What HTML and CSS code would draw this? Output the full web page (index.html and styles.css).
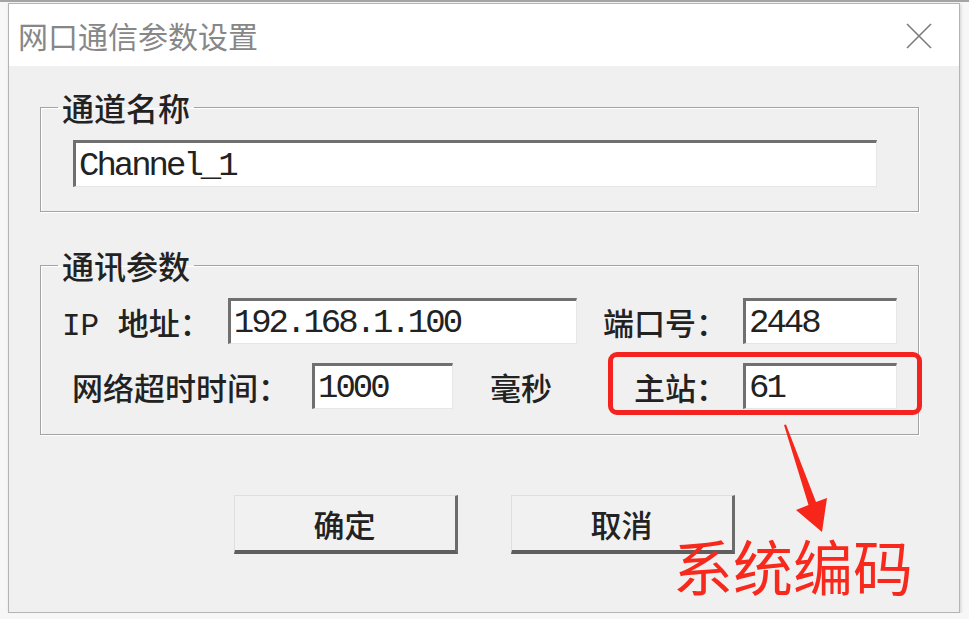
FILE: index.html
```html
<!DOCTYPE html>
<html lang="zh-CN">
<head>
  <meta charset="UTF-8">
  <meta name="viewport" content="width=device-width, initial-scale=1.0">
  <title>网口通信参数设置</title>
  <link rel="stylesheet" href="styles.css">
</head>
<body>
  <div class="dialog">
    <div class="titlebar">
      <span class="title">网口通信参数设置</span>
      <svg class="close" width="26" height="26" viewBox="0 0 26 26">
        <path d="M1 1L25 25M25 1L1 25" />
      </svg>
    </div>

    <div class="content">
      <fieldset class="group group-name">
        <legend>通道名称</legend>
        <div class="group-body">
          <div class="textbox">Channel_1</div>
        </div>
      </fieldset>

      <fieldset class="group group-comm">
        <legend>通讯参数</legend>
        <div class="group-body">
          <div class="row">
            <span class="label">IP 地址：</span>
            <div class="textbox ip">192.168.1.100</div>
            <div class="field-right">
              <span class="label">端口号：</span>
              <div class="textbox short">2448</div>
            </div>
          </div>
          <div class="row row-timeout">
            <span class="label">网络超时时间：</span>
            <div class="textbox timeout">1000</div>
            <span class="label unit">毫秒</span>
            <div class="field-right highlighted">
              <span class="label">主站：</span>
              <div class="textbox short">61</div>
            </div>
          </div>
        </div>
      </fieldset>

      <div class="buttons">
        <button class="btn">确定</button>
        <button class="btn">取消</button>
      </div>
    </div>

    <!-- annotation drawn over the screenshot -->
    <svg class="arrow" width="70" height="120" viewBox="0 0 70 120">
      <polygon points="14,5 16,4.5 46,82 57,78 52,112 26,90 38.5,85" />
    </svg>
    <div class="note">系统编码</div>
  </div>
</body>
</html>
```

FILE: styles.css
```css
body {
  margin: 0;
  padding: 0;
  background-color: #f7f7f7;
  border-top: 2px solid #a4a4a4;
  font-family: "Noto Sans CJK SC", sans-serif;
  color: #222;
}

.dialog {
  position: relative;
  box-sizing: border-box;
  width: 952px;
  height: 610px;
  margin: 1px 0 0 8px;
  background-color: #f0f0f0;
  border: 1px solid #b4b4b4;
  box-shadow: 1px 1px 3px rgba(0, 0, 0, 0.15);
}

.titlebar {
  display: flex;
  align-items: center;
  justify-content: space-between;
  height: 62px;
  padding: 0 27px 0 9px;
  background-color: #fff;
}

.title {
  font-size: 30px;
  color: #878787;
}

.close {
  margin-top: 2px;
}

.close path {
  stroke: #7c7c7c;
  stroke-width: 1.6;
  fill: none;
}

.content {
  padding: 24px 40px 0 31px;
}

.group {
  margin: 0;
  padding: 0;
  border: 1px solid #a3a3a3;
  box-shadow: 1px 1px 0 #fff, inset 1px 1px 0 #fff;
}

.group legend {
  margin-left: 17px;
  padding: 0 4px;
  font-size: 32px;
  line-height: 34px;
  font-weight: 500;
  color: #222;
}

.group-name .group-body {
  padding: 16px 41px 24px 32px;
}

.group-comm {
  margin-top: 36px;
}

.group-comm .group-body {
  padding: 16px 21px 25px 21px;
}

.textbox {
  box-sizing: border-box;
  display: flex;
  align-items: center;
  height: 47px;
  padding: 2px 0 0 3px;
  background-color: #fff;
  border-style: solid;
  border-width: 3px 1px 1px 3px;
  border-color: #707070 #e6e6e6 #e6e6e6 #707070;
  font-family: "Liberation Mono", monospace;
  font-size: 34px;
  letter-spacing: -3px;
  color: #222;
  white-space: nowrap;
}

.row {
  display: flex;
  align-items: center;
}

.row + .row {
  margin-top: 19px;
}

.row .textbox {
  height: 46px;
}

.label {
  font-family: "Liberation Mono", "Noto Sans CJK SC", monospace;
  font-size: 31px;
  font-weight: 500;
  white-space: pre;
}

.textbox.ip {
  width: 349px;
  margin-left: 17px;
}

.row-timeout > .label:first-child {
  margin-left: 10px;
}

.textbox.timeout {
  width: 141px;
  margin-left: 23px;
}

.unit {
  margin-left: 37px;
}

.field-right {
  position: relative;
  display: flex;
  align-items: center;
  justify-content: flex-end;
  width: 294px;
  margin-left: auto;
}

.field-right .label {
  text-align: right;
}

.textbox.short {
  width: 154px;
  margin-left: 16px;
}

.highlighted::after {
  content: "";
  position: absolute;
  left: 5px;
  right: -25px;
  top: -11px;
  bottom: -6px;
  border: 5px solid #f42320;
  border-radius: 9px;
}

.buttons {
  display: flex;
  justify-content: center;
  gap: 53px;
  margin-top: 60px;
  padding-left: 9px;
}

.btn {
  width: 224px;
  height: 59px;
  padding: 0;
  background-color: #f1f1f1;
  border-style: solid;
  border-width: 1px 3px 4px 1px;
  border-color: #dedede #6c6c6c #5e5e5e #dedede;
  font-family: "Noto Sans CJK SC", sans-serif;
  font-size: 31px;
  font-weight: 500;
  color: #222;
}

.arrow {
  position: absolute;
  left: 761px;
  top: 416px;
}

.arrow polygon {
  fill: #f7261b;
}

.note {
  position: absolute;
  left: 664px;
  top: 531px;
  font-size: 60px;
  line-height: 60px;
  color: #f7291d;
}
```
